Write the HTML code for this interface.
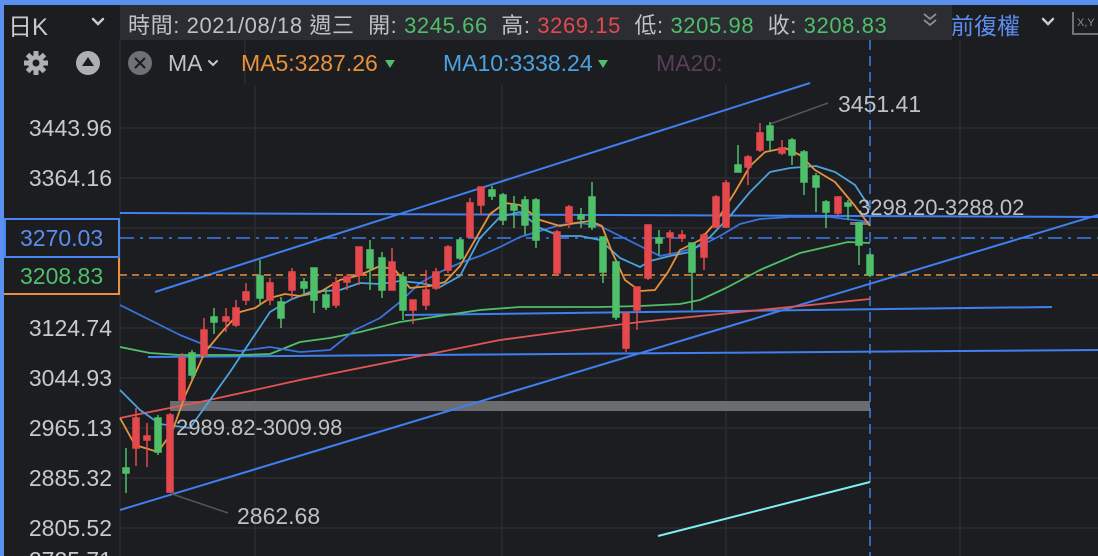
<!DOCTYPE html>
<html><head><meta charset="utf-8"><style>
html,body{margin:0;padding:0;background:#1c1d21;overflow:hidden;width:1098px;height:556px;}
body{position:relative;font-family:"Liberation Sans","Noto Sans CJK TC",sans-serif;}
.t{position:absolute;white-space:nowrap;}
</style></head><body>
<svg width="1098" height="556" style="position:absolute;left:0;top:0" xmlns="http://www.w3.org/2000/svg">
<rect width="1098" height="556" fill="#1c1d21"/>
<g stroke="#2b2c31" stroke-width="1.5">
<line x1="120" y1="128" x2="1098" y2="128"/><line x1="120" y1="178" x2="1098" y2="178"/>
<line x1="120" y1="228" x2="1098" y2="228"/><line x1="120" y1="278" x2="1098" y2="278"/>
<line x1="120" y1="328" x2="1098" y2="328"/><line x1="120" y1="378" x2="1098" y2="378"/>
<line x1="120" y1="428" x2="1098" y2="428"/><line x1="120" y1="478" x2="1098" y2="478"/>
<line x1="120" y1="528" x2="1098" y2="528"/>
<line x1="120" y1="40" x2="120" y2="556"/><line x1="255" y1="85" x2="255" y2="556"/>
<line x1="502" y1="85" x2="502" y2="556"/><line x1="726" y1="85" x2="726" y2="556"/>
<line x1="960" y1="40" x2="960" y2="556"/><line x1="245" y1="40" x2="245" y2="85"/>
</g>
<rect x="170" y="401" width="700" height="10" fill="#6b6c70"/>
<rect x="850" y="222" width="20" height="3" fill="#777"/>
<g stroke="#3f7ff0" stroke-width="2" fill="none">
<line x1="155" y1="292" x2="810" y2="83"/>
<line x1="120" y1="510" x2="1098" y2="215"/>
<line x1="120" y1="213" x2="1098" y2="217"/>
<line x1="148" y1="357" x2="1098" y2="350"/>
<line x1="405" y1="315" x2="1052" y2="307"/>
<line x1="120" y1="238" x2="1098" y2="238" stroke-dasharray="14,6,3,6" stroke-width="1.5"/>
<line x1="870" y1="40" x2="870" y2="556" stroke-dasharray="10,6" stroke-width="1.5"/>
</g>
<line x1="120" y1="275" x2="1098" y2="275" stroke="#e8913a" stroke-width="1.5" stroke-dasharray="7,5"/>
<line x1="658" y1="536" x2="870" y2="482" stroke="#7ef0f0" stroke-width="2"/>
<line x1="172" y1="494" x2="228" y2="513" stroke="#555" stroke-width="1.5"/>
<line x1="770" y1="124" x2="828" y2="103" stroke="#555" stroke-width="1.5"/>
<g fill="none" stroke-width="1.8" stroke-linejoin="round">
<polyline stroke="#e05656" points="120,418 200,402 300,380 400,360 500,340 560,332 640,322 700,316 760,310 870,299"/>
<polyline stroke="#4fbf6a" points="120,347 150,353 180,355 240,355 270,354 300,342 330,338 360,332 400,322 440,316 480,310 520,307 560,307 600,307 640,306 680,304 700,300 726,288 760,270 800,253 848,242 870,243"/>
<polyline stroke="#3a72e0" points="120,305 150,320 180,335 210,347 240,351 270,347 300,352 330,350 355,330 380,318 400,302 420,283 440,272 460,263 480,256 500,247 520,237 540,231 560,225 580,223 600,226 620,236 640,246 660,256 680,252 700,246 720,236 740,224 760,219 790,217 830,217 870,222"/>
<polyline stroke="#4aa3df" points="120,390 140,410 160,424 190,428 210,400 230,372 250,342 270,312 290,300 310,292 340,290 360,283 380,284 400,281 420,283 440,287 460,276 480,238 500,217 520,212 540,228 560,236 580,236 600,240 620,258 640,267 650,261 670,256 690,252 710,237 730,216 750,192 770,172 790,168 816,166 835,172 855,185 870,208"/>
<polyline stroke="#e8913a" points="120,418 135,445 158,452 172,432 185,396 205,352 220,334 240,312 255,308 270,298 285,294 300,296 320,292 340,280 360,275 380,266 395,270 410,288 430,286 445,282 460,266 475,240 490,214 505,203 520,205 540,220 560,226 575,223 590,221 602,226 612,252 625,280 640,291 655,290 668,272 680,250 700,240 716,222 735,192 750,166 765,152 785,148 800,155 815,170 835,182 855,206 870,226"/>
</g>
<g stroke-width="1.5">
<g stroke="#4fbf6a" fill="#4fbf6a">
<line x1="126" y1="448" x2="126" y2="493"/><rect x="123" y="468" width="6" height="5"/>
<line x1="158" y1="415" x2="158" y2="455"/><rect x="155" y="418" width="6" height="34"/>
<line x1="192" y1="350" x2="192" y2="380"/><rect x="189" y="353" width="6" height="22"/>
<line x1="214" y1="308" x2="214" y2="334"/><rect x="211" y="317" width="6" height="5"/>
<line x1="260" y1="260" x2="260" y2="305"/><rect x="257" y="276" width="6" height="22"/>
<line x1="281" y1="297" x2="281" y2="328"/><rect x="278" y="302" width="6" height="16"/>
<line x1="304" y1="278" x2="304" y2="296"/><rect x="301" y="282" width="6" height="6"/>
<line x1="314" y1="268" x2="314" y2="313"/><rect x="311" y="268" width="6" height="32"/>
<line x1="326" y1="288" x2="326" y2="310"/><rect x="323" y="295" width="6" height="12"/>
<line x1="370" y1="240" x2="370" y2="290"/><rect x="367" y="250" width="6" height="18"/>
<line x1="382" y1="252" x2="382" y2="298"/><rect x="379" y="258" width="6" height="32"/>
<line x1="403" y1="272" x2="403" y2="320"/><rect x="400" y="277" width="6" height="33"/>
<line x1="460" y1="238" x2="460" y2="260"/><rect x="457" y="240" width="6" height="18"/>
<line x1="492" y1="186" x2="492" y2="200"/><rect x="489" y="190" width="6" height="6"/>
<line x1="503" y1="193" x2="503" y2="225"/><rect x="500" y="195" width="6" height="25"/>
<line x1="514" y1="196" x2="514" y2="228"/><rect x="511" y="205" width="6" height="5"/>
<line x1="525" y1="196" x2="525" y2="235"/><rect x="522" y="200" width="6" height="25"/>
<line x1="536" y1="198" x2="536" y2="248"/><rect x="533" y="200" width="6" height="40"/>
<line x1="581" y1="208" x2="581" y2="228"/><rect x="578" y="215" width="6" height="4"/>
<line x1="592" y1="182" x2="592" y2="230"/><rect x="589" y="197" width="6" height="30"/>
<line x1="603" y1="237" x2="603" y2="283"/><rect x="600" y="237" width="6" height="35"/>
<line x1="616" y1="260" x2="616" y2="320"/><rect x="613" y="262" width="6" height="55"/>
<line x1="659" y1="230" x2="659" y2="255"/><rect x="656" y="238" width="6" height="5"/>
<line x1="692" y1="243" x2="692" y2="310"/><rect x="689" y="243" width="6" height="29"/>
<line x1="738" y1="145" x2="738" y2="172"/><rect x="735" y="165" width="6" height="7"/>
<line x1="770" y1="122" x2="770" y2="152"/><rect x="767" y="126" width="6" height="14"/>
<line x1="792" y1="138" x2="792" y2="165"/><rect x="789" y="140" width="6" height="15"/>
<line x1="804" y1="150" x2="804" y2="195"/><rect x="801" y="152" width="6" height="30"/>
<line x1="816" y1="173" x2="816" y2="212"/><rect x="813" y="176" width="6" height="11"/>
<line x1="826" y1="200" x2="826" y2="228"/><rect x="823" y="202" width="6" height="10"/>
<line x1="848" y1="200" x2="848" y2="220"/><rect x="845" y="203" width="6" height="3"/>
<line x1="859" y1="223" x2="859" y2="265"/><rect x="856" y="223" width="6" height="22"/>
<line x1="870" y1="253" x2="870" y2="277"/><rect x="867" y="255" width="6" height="20"/>
</g>
<g stroke="#e5484d" fill="#e5484d">
<line x1="136" y1="408" x2="136" y2="466"/><rect x="133" y="418" width="6" height="30"/>
<line x1="147" y1="423" x2="147" y2="467"/><rect x="144" y="436" width="6" height="4"/>
<line x1="170" y1="413" x2="170" y2="493"/><rect x="167" y="415" width="6" height="77"/>
<line x1="182" y1="353" x2="182" y2="402"/><rect x="179" y="358" width="6" height="42"/>
<line x1="204" y1="318" x2="204" y2="357"/><rect x="201" y="330" width="6" height="25"/>
<line x1="226" y1="308" x2="226" y2="332"/><rect x="223" y="317" width="6" height="4"/>
<line x1="236" y1="300" x2="236" y2="327"/><rect x="233" y="308" width="6" height="17"/>
<line x1="246" y1="283" x2="246" y2="305"/><rect x="243" y="292" width="6" height="8"/>
<line x1="270" y1="278" x2="270" y2="305"/><rect x="267" y="283" width="6" height="17"/>
<line x1="292" y1="268" x2="292" y2="300"/><rect x="289" y="272" width="6" height="18"/>
<line x1="336" y1="277" x2="336" y2="308"/><rect x="333" y="283" width="6" height="22"/>
<line x1="347" y1="274" x2="347" y2="290"/><rect x="344" y="277" width="6" height="5"/>
<line x1="359" y1="247" x2="359" y2="285"/><rect x="356" y="247" width="6" height="28"/>
<line x1="392" y1="248" x2="392" y2="290"/><rect x="389" y="262" width="6" height="28"/>
<line x1="413" y1="300" x2="413" y2="324"/><rect x="410" y="300" width="6" height="10"/>
<line x1="426" y1="270" x2="426" y2="310"/><rect x="423" y="290" width="6" height="15"/>
<line x1="436" y1="268" x2="436" y2="290"/><rect x="433" y="272" width="6" height="16"/>
<line x1="448" y1="245" x2="448" y2="273"/><rect x="445" y="247" width="6" height="23"/>
<line x1="470" y1="198" x2="470" y2="237"/><rect x="467" y="203" width="6" height="34"/>
<line x1="481" y1="187" x2="481" y2="215"/><rect x="478" y="187" width="6" height="18"/>
<line x1="557" y1="230" x2="557" y2="275"/><rect x="554" y="232" width="6" height="41"/>
<line x1="569" y1="205" x2="569" y2="228"/><rect x="566" y="207" width="6" height="15"/>
<line x1="626" y1="313" x2="626" y2="352"/><rect x="623" y="313" width="6" height="35"/>
<line x1="637" y1="287" x2="637" y2="330"/><rect x="634" y="287" width="6" height="23"/>
<line x1="648" y1="225" x2="648" y2="280"/><rect x="645" y="225" width="6" height="53"/>
<line x1="670" y1="230" x2="670" y2="255"/><rect x="667" y="233" width="6" height="4"/>
<line x1="682" y1="230" x2="682" y2="242"/><rect x="679" y="235" width="6" height="3"/>
<line x1="704" y1="233" x2="704" y2="270"/><rect x="701" y="235" width="6" height="22"/>
<line x1="716" y1="195" x2="716" y2="228"/><rect x="713" y="197" width="6" height="30"/>
<line x1="726" y1="180" x2="726" y2="228"/><rect x="723" y="183" width="6" height="44"/>
<line x1="748" y1="155" x2="748" y2="185"/><rect x="745" y="157" width="6" height="10"/>
<line x1="760" y1="123" x2="760" y2="152"/><rect x="757" y="133" width="6" height="17"/>
<line x1="782" y1="140" x2="782" y2="155"/><rect x="779" y="148" width="6" height="5"/>
<line x1="838" y1="196" x2="838" y2="215"/><rect x="835" y="197" width="6" height="16"/>
</g>
</g>
<rect x="0" y="0" width="1098" height="5" fill="#5b8ff0"/>
<rect x="0" y="0" width="4" height="556" fill="#5b8ff0"/>
<rect x="120" y="5" width="832" height="35" fill="#2c2d32"/>
<g fill="none" stroke="#c8c9cc" stroke-width="2.5" stroke-linecap="round">
<polyline points="93,19 98,24 103,19"/>
<polyline points="1043,19 1048,24 1053,19"/>
<polyline points="209,61 213,65 217,61" stroke-width="2"/>
</g>
<g fill="none" stroke="#8d8e93" stroke-width="1.8">
<polyline points="924,14 930,19 936,14"/><polyline points="924,20 930,25 936,20"/>
</g>
<g stroke="#8d8e93" stroke-width="1.5" fill="none"><polyline points="1073,12 1073,34 1098,34"/></g>
<text x="1077" y="26" font-size="11" fill="#8d8e93" font-family="Liberation Sans">X,Y</text>
<g transform="translate(36,63)" fill="#aeafb3">
<circle r="8"/>
<g><rect x="-2.5" y="-12" width="5" height="24"/><rect x="-12" y="-2.5" width="24" height="5"/>
<rect x="-2.5" y="-12" width="5" height="24" transform="rotate(45)"/><rect x="-2.5" y="-12" width="5" height="24" transform="rotate(-45)"/></g>
<circle r="3.5" fill="#1c1d21"/>
</g>
<circle cx="88" cy="63" r="12" fill="#aeafb3"/><polygon points="88,57 94,66 82,66" fill="#1c1d21"/>
<circle cx="140" cy="63" r="12" fill="#6f7075"/>
<g stroke="#1c1d21" stroke-width="2"><line x1="135" y1="58" x2="145" y2="68"/><line x1="145" y1="58" x2="135" y2="68"/></g>
<polygon points="385,60 395,60 390,68" fill="#4fbf6a"/>
<polygon points="598,60 608,60 603,68" fill="#4fbf6a"/>
<rect x="5" y="219" width="114" height="38" fill="#1c1d21" stroke="#4a86f0" stroke-width="2"/>
<rect x="5" y="258" width="114" height="36" fill="#1c1d21"/>
<line x1="4" y1="294" x2="120" y2="294" stroke="#e8913a" stroke-width="2"/>
<line x1="119" y1="258" x2="119" y2="295" stroke="#e8913a" stroke-width="2"/>
</svg>

<div class="t" style="left:8px;top:7px;font-size:24px;color:#c8c9cc;">日K</div>
<div class="t" style="left:128px;top:8px;font-size:22px;letter-spacing:0.6px;color:#c0c1c5;">時間: 2021/08/18 週三&nbsp; 開: <span style="color:#4fbf6a">3245.66</span>&nbsp; 高: <span style="color:#e5484d">3269.15</span>&nbsp; 低: <span style="color:#4fbf6a">3205.98</span>&nbsp; 收: <span style="color:#4fbf6a">3208.83</span></div>
<div class="t" style="left:951px;top:7px;font-size:23px;color:#5b8def;">前復權</div>
<div class="t" style="left:168px;top:50px;font-size:23px;color:#c0c1c5;">MA</div>
<div class="t" style="left:241px;top:50px;font-size:23px;color:#e8913a;">MA5:3287.26</div>
<div class="t" style="left:443px;top:50px;font-size:23px;color:#4aa3df;">MA10:3338.24</div>
<div class="t" style="left:656px;top:50px;font-size:23px;color:#5a3d57;">MA20:</div>

<div style="position:absolute;left:4px;top:0;width:108px;height:556px;overflow:hidden;font-size:23px;color:#c8c9cc;text-align:right;">
<div class="t" style="right:0;top:115px;">3443.96</div>
<div class="t" style="right:0;top:165px;">3364.16</div>
<div class="t" style="right:0;top:315px;">3124.74</div>
<div class="t" style="right:0;top:365px;">3044.93</div>
<div class="t" style="right:0;top:415px;">2965.13</div>
<div class="t" style="right:0;top:465px;">2885.32</div>
<div class="t" style="right:0;top:515px;">2805.52</div>
<div class="t" style="right:0;top:547px;">2725.71</div>
</div>
<div class="t" style="left:20px;top:225px;font-size:23px;color:#5b8def;">3270.03</div>
<div class="t" style="left:20px;top:263px;font-size:23px;color:#4fbf6a;">3208.83</div>

<div class="t" style="left:838px;top:91px;font-size:23px;color:#c0c1c5;">3451.41</div>
<div class="t" style="left:858px;top:195px;font-size:22px;color:#c0c1c5;">3298.20-3288.02</div>
<div class="t" style="left:176px;top:415px;font-size:22px;color:#c0c1c5;">2989.82-3009.98</div>
<div class="t" style="left:237px;top:503px;font-size:23px;color:#c0c1c5;">2862.68</div>
</body></html>
